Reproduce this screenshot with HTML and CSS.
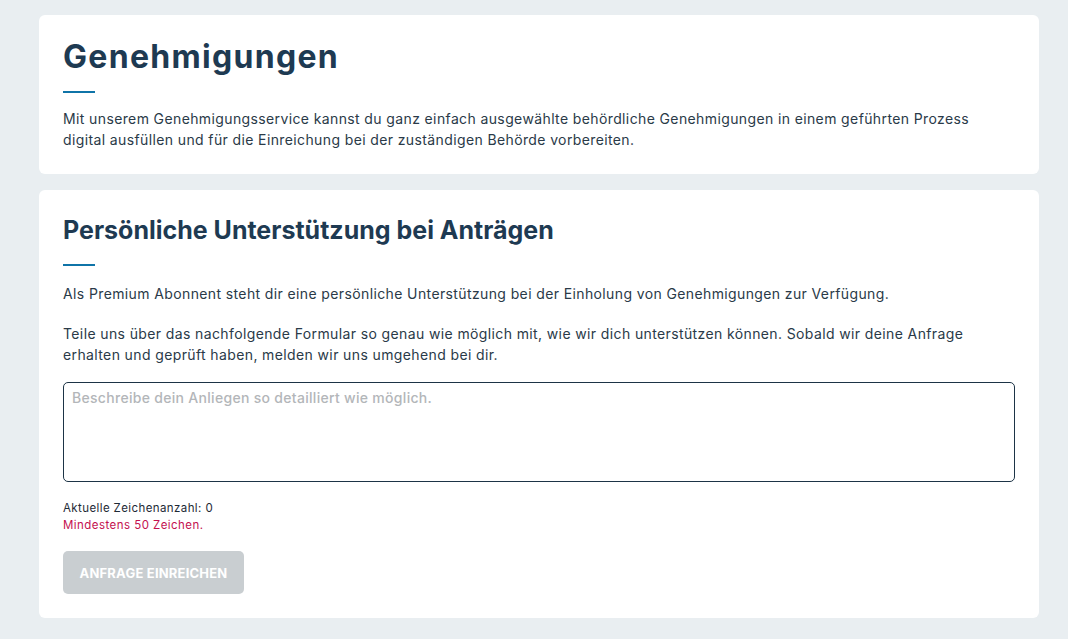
FILE: index.html
```html
<!DOCTYPE html>
<html lang="de">
<head>
<meta charset="utf-8">
<title>Genehmigungen</title>
<link rel="stylesheet" href="styles.css">
</head>
<body>
<main class="page">
  <section class="card card-intro">
    <h1 class="title">Genehmigungen</h1>
    <div class="rule"></div>
    <p class="text">Mit unserem Genehmigungsservice kannst du ganz einfach ausgewählte behördliche Genehmigungen in einem geführten Prozess digital ausfüllen und für die Einreichung bei der zuständigen Behörde vorbereiten.</p>
  </section>
  <section class="card card-support">
    <h2 class="subtitle">Persönliche Unterstützung bei Anträgen</h2>
    <div class="rule rule-sub"></div>
    <p class="text">Als Premium Abonnent steht dir eine persönliche Unterstützung bei der Einholung von Genehmigungen zur Verfügung.</p>
    <p class="text text-gap">Teile uns über das nachfolgende Formular so genau wie möglich mit, wie wir dich unterstützen können. Sobald wir deine Anfrage erhalten und geprüft haben, melden wir uns umgehend bei dir.</p>
    <textarea class="field" placeholder="Beschreibe dein Anliegen so detailliert wie möglich."></textarea>
    <div class="count">Aktuelle Zeichenanzahl: 0</div>
    <div class="error">Mindestens 50 Zeichen.</div>
    <button class="btn" type="button" disabled>ANFRAGE EINREICHEN</button>
  </section>
</main>
</body>
</html>
```
FILE: styles.css
```css
* { box-sizing: border-box; }
html, body { margin: 0; padding: 0; }
body {
  background: #e9eef1;
  font-family: "Inter", "Open Sans", sans-serif;
  color: #2a3a48;
}
.page {
  width: 1000px;
  margin-left: 39px;
  padding-top: 15px;
  display: flex;
  flex-direction: column;
  gap: 16px;
}
.card {
  background: #fff;
  border-radius: 6px;
  padding: 22px 24px 24px;
}
.title {
  margin: 0;
  font-size: 32px;
  line-height: 40px;
  font-weight: 700;
  letter-spacing: 1.3px;
  color: #1e3a52;
}
.subtitle {
  margin: 0;
  font-size: 25px;
  line-height: 32px;
  font-weight: 700;
  color: #1e3a52;
  padding-top: 2px;
}
.rule {
  width: 32px;
  height: 2px;
  background: #0f74a8;
  margin-top: 14px;
  margin-bottom: 15px;
}
.rule-sub { margin-top: 18px; margin-bottom: 17px; }
.text {
  margin: 0;
  max-width: 922px;
  font-size: 14px;
  line-height: 21px;
  letter-spacing: 0.38px;
}
.text-gap { margin-top: 19px; }
.field {
  display: block;
  width: 952px;
  height: 100px;
  margin-top: 17px;
  border: 1px solid #1d3446;
  border-radius: 5px;
  padding: 6px 8px;
  font-family: inherit;
  font-size: 14px;
  letter-spacing: 0.3px;
  resize: none;
  color: #2a3a48;
  background: #fff;
}
.field::placeholder { color: #b3b6b9; font-weight: 500; }
.count {
  margin-top: 18px;
  font-size: 11.5px;
  line-height: 17px;
  letter-spacing: 0.4px;
  color: #1e2a36;
}
.error {
  font-size: 11.5px;
  line-height: 17px;
  letter-spacing: 0.45px;
  color: #c4104f;
}
.btn {
  display: block;
  margin-top: 17px;
  width: 181px;
  height: 43px;
  border: none;
  border-radius: 5px;
  background: #c9ced1;
  color: #fff;
  font-family: inherit;
  font-weight: 700;
  font-size: 13px;
  letter-spacing: 0.2px;
  padding: 0;
}
```
